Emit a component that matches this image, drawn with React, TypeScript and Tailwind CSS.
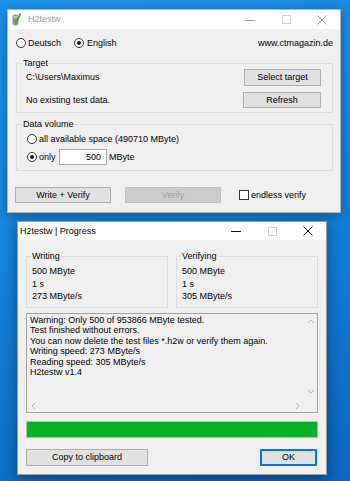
import type { ReactNode } from 'react'

function Radio({ checked }: { checked?: boolean }) {
  return (
    <span className="flex h-[10px] w-[10px] shrink-0 items-center justify-center rounded-full border border-[#333] bg-white">
      {checked && <span className="h-[4px] w-[4px] rounded-full bg-[#1a1a1a]" />}
    </span>
  )
}

function Btn({
  children,
  className = '',
  disabled,
  focused,
}: {
  children: ReactNode
  className?: string
  disabled?: boolean
  focused?: boolean
}) {
  const look = disabled
    ? 'border border-[#bfbfbf] bg-[#cccccc] text-[#a3a3a3]'
    : focused
      ? 'border-2 border-[#0078d7] bg-[#e1e1e1] text-black'
      : 'border border-[#adadad] bg-[#e1e1e1] text-black'
  return <div className={`flex shrink-0 items-center justify-center ${look} ${className}`}>{children}</div>
}

function Controls({ active }: { active?: boolean }) {
  const ink = active ? '#111' : '#9a9a9a'
  return (
    <div className="ml-auto flex h-full">
      <div className="flex w-[36px] items-center justify-center">
        <svg width="10" height="10" viewBox="0 0 10 10">
          <path d="M0 5.5h10" stroke={ink} strokeWidth="1" />
        </svg>
      </div>
      <div className="flex w-[36px] items-center justify-center">
        <svg width="9" height="9" viewBox="0 0 9 9">
          <rect x="0.5" y="0.5" width="8" height="8" fill="none" stroke="#cfcfcf" strokeWidth="1" />
        </svg>
      </div>
      <div className="flex w-[36px] items-center justify-center">
        <svg width="10" height="10" viewBox="0 0 10 10">
          <path d="M0.5 0.5l9 9M9.5 0.5l-9 9" stroke={ink} strokeWidth="1" />
        </svg>
      </div>
    </div>
  )
}

function DriveIcon() {
  return (
    <svg width="9" height="13" viewBox="0 0 9 13">
      <rect x="0.5" y="1.5" width="6" height="11" rx="2" fill="#9a9a9a" />
      <rect x="1.5" y="3" width="4" height="2" rx="1" fill="#c8c8c8" />
      <path d="M1.5 6.5l2.5 3.5L8.5 0.5" fill="none" stroke="#3fae2a" strokeWidth="1.8" />
    </svg>
  )
}

function Chevron({ dir }: { dir: 'up' | 'down' | 'left' | 'right' }) {
  const d = {
    up: 'M1 5l3-3 3 3',
    down: 'M1 2l3 3 3-3',
    left: 'M5 1L2 4l3 3',
    right: 'M2 1l3 3-3 3',
  }[dir]
  return (
    <svg width="7" height="7" viewBox="0 0 7 7">
      <path d={d} fill="none" stroke="#b8b8b8" strokeWidth="1" />
    </svg>
  )
}

const log = [
  'Warning: Only 500 of 953866 MByte tested.',
  'Test finished without errors.',
  'You can now delete the test files *.h2w or verify them again.',
  'Writing speed: 273 MByte/s',
  'Reading speed: 305 MByte/s',
  'H2testw v1.4',
]

export default function App() {
  return (
    <div className="flex h-[481px] w-[350px] flex-col overflow-hidden bg-[linear-gradient(165deg,#1d92e9_0%,#1584dc_45%,#0b66bf_100%)] font-['Liberation_Sans',Arial,sans-serif] text-[9px] leading-[11px] text-black">
      {/* main window */}
      <div className="ml-[7px] mt-[9px] flex h-[204px] w-[334px] shrink-0 flex-col border border-[#b4b4b4] bg-[#f0f0f0] shadow-[0_2px_10px_rgba(0,0,0,0.35)]">
        <div className="flex h-[19px] shrink-0 items-center bg-white pl-[4px]">
          <DriveIcon />
          <span className="ml-[7px] text-[#9c9c9c]">H2testw</span>
          <Controls />
        </div>
        <div className="flex flex-1 flex-col">
          <div className="mt-[8px] flex h-[12px] items-center pl-[8px] pr-[7px]">
            <div className="flex w-[58px] items-center gap-[2px]">
              <Radio />
              <span>Deutsch</span>
            </div>
            <div className="flex items-center gap-[3px]">
              <Radio checked />
              <span>English</span>
            </div>
            <span className="ml-auto">www.ctmagazin.de</span>
          </div>

          <fieldset className="ml-[8px] mr-[7px] mt-[8px] border border-[#dcdcdc] pb-[4px] pl-[5px] pr-[11px]">
            <legend className="px-[1px] leading-[12px]">Target</legend>
            <div className="flex flex-col pl-[4px]">
              <div className="flex h-[17px] items-center">
                <span>C:\Users\Maximus</span>
                <Btn className="ml-auto h-[17px] w-[77px]">Select target</Btn>
              </div>
              <div className="mt-[6px] flex h-[16px] items-center">
                <span>No existing test data.</span>
                <Btn className="ml-auto h-[16px] w-[78px]">Refresh</Btn>
              </div>
            </div>
          </fieldset>

          <fieldset className="ml-[8px] mr-[7px] mt-[5px] border border-[#dcdcdc] pb-[5px] pl-[5px] pr-[11px]">
            <legend className="px-[1px] leading-[12px]">Data volume</legend>
            <div className="flex flex-col pl-[5px]">
              <div className="mt-[3px] flex h-[12px] items-center gap-[2px]">
                <Radio />
                <span>all available space (490710 MByte)</span>
              </div>
              <div className="mt-[4px] flex h-[16px] items-center">
                <Radio checked />
                <span className="ml-[2px] w-[20px]">only</span>
                <div className="flex h-[16px] w-[48px] items-center justify-end border border-[#a8a8a8] bg-white pr-[5px]">
                  500
                </div>
                <span className="ml-[2px]">MByte</span>
              </div>
            </div>
          </fieldset>

          <div className="mt-[16px] flex h-[16px] items-center pl-[7px]">
            <Btn className="h-[16px] w-[96px]">Write + Verify</Btn>
            <Btn disabled className="ml-[14px] h-[16px] w-[96px]">
              Verify
            </Btn>
            <span className="ml-[18px] h-[10px] w-[10px] border border-[#333] bg-white" />
            <span className="ml-[2px]">endless verify</span>
          </div>
        </div>
      </div>

      {/* progress window */}
      <div className="ml-[17px] mt-[8px] flex h-[254px] w-[310px] shrink-0 flex-col border border-[#9e9e9e] bg-[#f0f0f0] shadow-[0_3px_12px_rgba(0,0,0,0.45)]">
        <div className="flex h-[18px] shrink-0 items-center bg-white pl-[2px]">
          <span>H2testw | Progress</span>
          <Controls active />
        </div>
        <div className="flex flex-1 flex-col pl-[8px] pr-[8px]">
          <div className="mt-[10px] flex gap-[8px]">
            {[
              ['Writing', '500 MByte', '1 s', '273 MByte/s'],
              ['Verifying', '500 MByte', '1 s', '305 MByte/s'],
            ].map(([title, ...lines]) => (
              <fieldset key={title} className="w-[142px] border border-[#dcdcdc] pb-[4px] pl-[4px]">
                <legend className="px-[1px] leading-[12px]">{title}</legend>
                <div className="flex flex-col pl-[1px] pt-[3px] leading-[12.5px]">
                  {lines.map((l) => (
                    <span key={l}>{l}</span>
                  ))}
                </div>
              </fieldset>
            ))}
          </div>

          <div className="mt-[5px] flex h-[100px] w-[292px] border border-[#a0a0a0] bg-[#f0f0f0]">
            <div className="flex flex-1 flex-col">
              <div className="flex flex-1 flex-col pl-[3px] pt-[1px] leading-[10.5px]">
                {log.map((l) => (
                  <span key={l} className="whitespace-nowrap">
                    {l}
                  </span>
                ))}
              </div>
              <div className="flex h-[13px] items-center justify-between px-[3px]">
                <Chevron dir="left" />
                <Chevron dir="right" />
              </div>
            </div>
            <div className="flex w-[13px] flex-col">
              <div className="flex flex-1 flex-col items-center justify-between py-[4px]">
                <Chevron dir="up" />
                <Chevron dir="down" />
              </div>
              <div className="h-[13px]" />
            </div>
          </div>

          <div className="mt-[8px] h-[17px] w-[292px] border border-[#bcbcbc] bg-[#06b025]" />

          <div className="mt-[11px] flex items-center">
            <Btn className="h-[17px] w-[122px]">Copy to clipboard</Btn>
            <Btn focused className="ml-auto mr-[1px] h-[17px] w-[57px]">
              OK
            </Btn>
          </div>
        </div>
      </div>
    </div>
  )
}
